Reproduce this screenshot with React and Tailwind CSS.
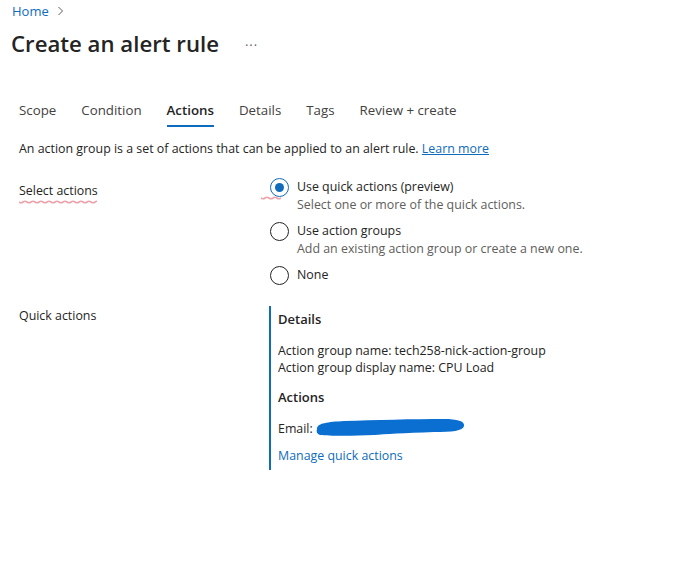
import React from "react";

const TABS = ["Scope", "Condition", "Actions", "Details", "Tags", "Review + create"];

function Radio({ checked, label, hint }) {
  return (
    <div className="flex items-start gap-[8px]">
      <span
        className={`mt-[1px] w-[19px] h-[19px] shrink-0 rounded-full border flex items-center justify-center ${
          checked ? "border-[#0f6cbd]" : "border-[#242424]"
        }`}
      >
        {checked && <span className="w-[9px] h-[9px] rounded-full bg-[#0f6cbd]" />}
      </span>
      <div>
        <div className="text-[12.4px] leading-[20px] text-[#242424]">{label}</div>
        {hint && <div className="text-[12.4px] leading-[16px] text-[#605e5c]">{hint}</div>}
      </div>
    </div>
  );
}

function Squiggle({ width }) {
  return (
    <svg width={width} height="5" className="block" viewBox={`0 0 ${width} 5`}>
      <path
        d={`M0 2 ${Array.from({ length: Math.ceil(width / 4) }, (_, i) => `Q${i * 4 + 2} ${i % 2 ? 0.5 : 3.5} ${i * 4 + 4} 2`).join(" ")}`}
        fill="none"
        stroke="#eea3aa"
        strokeWidth="1.6"
      />
    </svg>
  );
}

export default function App() {
  return (
    <div
      className="w-[679px] h-[578px] bg-white text-[#242424]"
      style={{ fontFamily: '"Open Sans", "Noto Sans", sans-serif' }}
    >
      {/* breadcrumb */}
      <div className="pl-[12px] pt-[2px] flex items-center gap-[8px] text-[13px] leading-[18px]">
        <span className="text-[#0f6cbd]">Home</span>
        <svg width="7" height="10" viewBox="0 0 7 10">
          <path d="M1.5 1 L5.5 5 L1.5 9" fill="none" stroke="#605e5c" strokeWidth="1" />
        </svg>
      </div>

      {/* title */}
      <div className="pl-[11px] mt-[9px] flex items-center">
        <h1 className="text-[22.2px] leading-[30px] font-semibold text-[#242424]">Create an alert rule</h1>
        <span className="ml-[26px] mb-[4px] text-[13px] tracking-[1px] text-[#605e5c]">...</span>
      </div>

      {/* tabs */}
      <div className="mt-[41px] pl-[19px] flex gap-[25px] text-[13.3px] leading-[20px]">
        {TABS.map((t) => (
          <div key={t} className="flex flex-col">
            <span className={t === "Actions" ? "font-semibold text-[#242424]" : "text-[#424242]"}>{t}</span>
            <span className={`mt-[5px] h-[2px] ${t === "Actions" ? "bg-[#0f6cbd]" : "bg-transparent"}`} />
          </div>
        ))}
      </div>

      <p className="mt-[13px] pl-[19px] text-[12.4px] leading-[18px] text-[#242424]">
        An action group is a set of actions that can be applied to an alert rule.{" "}
        <span className="text-[#0f6cbd] underline">Learn more</span>
      </p>

      {/* select actions */}
      <div className="mt-[19px] flex">
        <div className="w-[270px] pl-[19px]">
          <div className="inline-flex flex-col">
            <span className="text-[12.4px] leading-[18px]">Select actions</span>
            <Squiggle width={78} />
          </div>
        </div>
        <div className="flex flex-col gap-[8px]">
          <div className="relative">
            <Radio checked label="Use quick actions (preview)" hint="Select one or more of the quick actions." />
            <div className="absolute left-[-9px] top-[19px]">
              <Squiggle width={20} />
            </div>
          </div>
          <Radio label="Use action groups" hint="Add an existing action group or create a new one." />
          <Radio label="None" />
        </div>
      </div>

      {/* quick actions */}
      <div className="mt-[21px] flex">
        <div className="w-[269px] pl-[19px] pt-[1px] text-[12.4px] leading-[18px]">Quick actions</div>
        <div className="border-l-[2px] border-[#0f6cbd] pl-[7px] pt-[3px] pb-[5px] text-[12.4px] w-[300px]">
          <div className="font-semibold text-[13px] leading-[20px]">Details</div>
          <div className="mt-[13px] leading-[17px]">Action group name: tech258-nick-action-group</div>
          <div className="leading-[17px]">Action group display name: CPU Load</div>
          <div className="mt-[11px] font-semibold text-[13px] leading-[20px]">Actions</div>
          <div className="mt-[11px] leading-[17px] flex items-center">
            <span>Email:</span>
            <svg width="152" height="20" viewBox="0 0 152 20" className="ml-[1px]">
              <path
                d="M3 11 C3 5 14 4 30 3 C60 2 100 1 130 1 C143 1 151 3 150 8 C149 13 138 14 120 14 C90 15 70 16 60 17 C40 18 15 18 6 17 C3 16 2 14 3 11 Z"
                fill="#0a6fd1"
              />
            </svg>
          </div>
          <div className="mt-[9px] text-[#0f6cbd] leading-[18px]">Manage quick actions</div>
        </div>
      </div>
    </div>
  );
}
